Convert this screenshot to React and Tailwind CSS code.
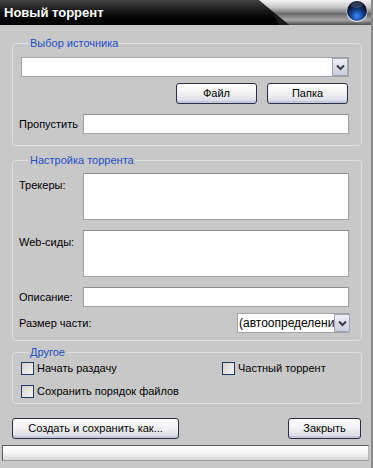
import React from "react";

/**
 * "Новый торрент" dialog, XP-ish skin
 */

function Chevron() {
  return (
    <svg width="9" height="7" viewBox="0 0 9 7">
      <path d="M1 1.5 L4.5 5 L8 1.5" fill="none" stroke="#3c3c46" strokeWidth="2" />
    </svg>
  );
}

function DropArrow() {
  return (
    <div className="flex w-[16px] shrink-0 items-center justify-center border border-[#9ea6b8] bg-gradient-to-b from-[#eef0f6] to-[#c9cedb]">
      <Chevron />
    </div>
  );
}

function Button({ children, className = "" }) {
  return (
    <button
      className={`h-[21px] rounded-[3px] border border-[#2a2f45] bg-gradient-to-b from-white via-[#f1f1f3] to-[#d5d8e4] text-black shadow-[inset_0_-2px_0_#c3c8da] ${className}`}
    >
      {children}
    </button>
  );
}

function Field({ className = "" }) {
  return <div className={`border border-[#a3a3a3] border-t-[#8e8e8e] bg-white ${className}`} />;
}

function Checkbox({ label }) {
  return (
    <label className="flex h-[14px] items-center gap-[3px]">
      <span className="h-[13px] w-[13px] border border-[#1d3a66] bg-gradient-to-br from-[#d4d4cc] to-[#f6f6f2]" />
      <span>{label}</span>
    </label>
  );
}

function Group({ title, className = "", children }) {
  return (
    <fieldset className={`rounded-[4px] border border-[#dedede] ${className}`}>
      <legend className="ml-[8px] px-[1px] leading-[14px] text-[#1f4fc8]">{title}</legend>
      {children}
    </fieldset>
  );
}

function TitleBar() {
  return (
    <div className="relative flex h-[25px] shrink-0 items-center bg-gradient-to-b from-[#444] via-[#141414] to-black">
      <span className="pl-[4px] text-[13px] font-bold text-white">Новый торрент</span>
      <svg className="absolute right-0 top-0" width="112" height="25" viewBox="0 0 112 25">
        <defs>
          <linearGradient id="silver" x1="0" y1="0" x2="0" y2="1">
            <stop offset="0" stopColor="#f4f4f4" />
            <stop offset="0.3" stopColor="#c4c4c4" />
            <stop offset="0.55" stopColor="#6a6a6a" />
            <stop offset="0.8" stopColor="#a8a8a8" />
            <stop offset="1" stopColor="#4a4a4a" />
          </linearGradient>
          <radialGradient id="orb" cx="0.5" cy="0.75" r="0.6">
            <stop offset="0" stopColor="#3a8cff" />
            <stop offset="0.55" stopColor="#123a86" />
            <stop offset="1" stopColor="#0a1426" />
          </radialGradient>
        </defs>
        <path d="M0 0 H112 V25 H30 Z" fill="url(#silver)" />
        <path d="M14 13 L30 25 H20 Z" fill="#1a1a1a" />
        <circle cx="98" cy="11.5" r="10.5" fill="#f0f0f0" />
        <circle cx="98" cy="11" r="10" fill="url(#orb)" />
        <ellipse cx="98" cy="5" rx="6" ry="3" fill="#5a6a84" opacity="0.45" />
      </svg>
    </div>
  );
}

export default function App() {
  return (
    <div className="flex h-[468px] w-[373px] flex-col border-r-2 border-[#8a8a8a] bg-[#c8c8c8] font-['Liberation_Sans',Arial,sans-serif] text-[11px] text-black">
      <TitleBar />

      <div className="flex flex-col px-[12px] pt-[11px] pr-[9px]">
        {/* source */}
        <Group title="Выбор источника" className="px-[8px] pb-[11px] pr-[12px]">
          <div className="mt-[7px] flex h-[20px] border border-[#a3a3a3] bg-white">
            <div className="flex-1" />
            <DropArrow />
          </div>
          <div className="mt-[6px] flex justify-end gap-[10px] pr-[1px]">
            <Button className="w-[81px]">Файл</Button>
            <Button className="w-[81px]">Папка</Button>
          </div>
          <div className="mt-[10px] flex items-center">
            <span className="-ml-[2px] w-[64px]">Пропустить</span>
            <Field className="h-[20px] flex-1" />
          </div>
        </Group>

        {/* torrent settings */}
        <Group title="Настройка торрента" className="mt-[7px] px-[8px] pb-[7px] pr-[12px]">
          <div className="mt-[6px] flex">
            <span className="-ml-[2px] w-[64px] pt-[4px]">Трекеры:</span>
            <Field className="h-[47px] flex-1" />
          </div>
          <div className="mt-[10px] flex">
            <span className="-ml-[2px] w-[64px] pt-[4px]">Web-сиды:</span>
            <Field className="h-[47px] flex-1" />
          </div>
          <div className="mt-[10px] flex items-center">
            <span className="-ml-[2px] w-[64px]">Описание:</span>
            <Field className="h-[20px] flex-1" />
          </div>
          <div className="mt-[6px] flex items-center justify-between">
            <span className="-ml-[2px]">Размер части:</span>
            <div className="flex h-[20px] w-[112px] border border-[#a3a3a3] bg-white">
              <span className="flex-1 whitespace-nowrap pl-[1px] text-[12px] leading-[18px]">(автоопределени</span>
              <DropArrow />
            </div>
          </div>
        </Group>

        {/* other */}
        <Group title="Другое" className="mt-[4px] px-[8px] pb-[5px]">
          <div className="mt-[2px] flex">
            <div className="w-[201px]">
              <Checkbox label="Начать раздачу" />
            </div>
            <Checkbox label="Частный торрент" />
          </div>
          <div className="mt-[9px]">
            <Checkbox label="Сохранить порядок файлов" />
          </div>
        </Group>

        <div className="mt-[14px] flex justify-between pr-[1px]">
          <Button className="w-[167px]">Создать и сохранить как...</Button>
          <Button className="w-[73px]">Закрыть</Button>
        </div>
      </div>

      <div className="mx-[2px] mt-[6px] h-[16px] border border-[#5e5e5e] border-b-[#9a9a9a] border-r-[#b4b4b4] bg-gradient-to-b from-white via-[#f6f6f6] to-[#d6d6d6]" />
    </div>
  );
}
